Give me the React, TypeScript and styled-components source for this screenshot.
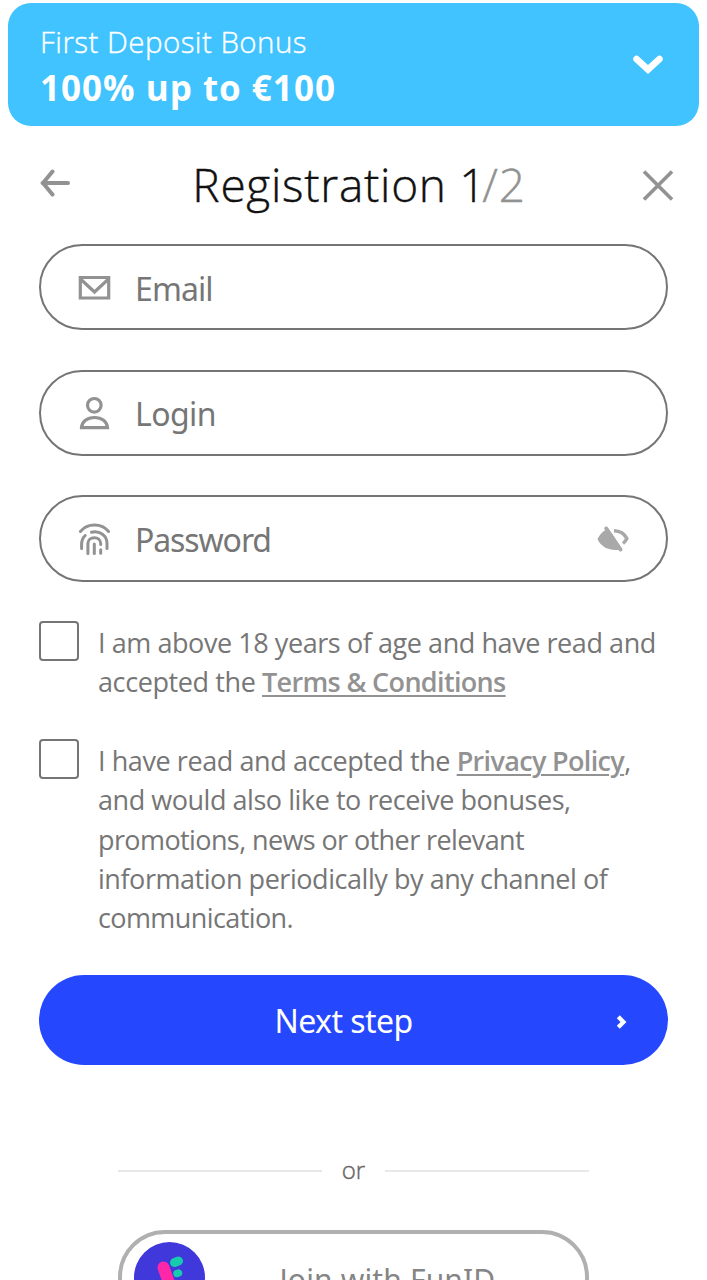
import React from "react";
import styled, { createGlobalStyle } from "styled-components";

const GlobalStyle = createGlobalStyle`
  *, *::before, *::after { box-sizing: border-box; }
  html, body { margin: 0; background: #fff; }
  body { height: 1280px; overflow: hidden; }
  button, input { font: inherit; }
`;

const Page = styled.main`
  width: 707px;
  height: 1280px;
  overflow: hidden;
  padding: 3px 8px 0;
  background: #fff;
  color: #767676;
  font-family: "Open Sans", "Noto Sans", sans-serif;
`;

const Banner = styled.section`
  display: flex;
  align-items: center;
  justify-content: space-between;
  height: 123px;
  padding: 0 36px 0 32px;
  border-radius: 23px;
  background: #40c3ff;
  color: #fff;
`;

const BannerText = styled.div`
  display: flex;
  flex-direction: column;
  padding-top: 1px;
`;

const BannerLabel = styled.span`
  font-size: 29.5px;
  line-height: 44px;
  font-weight: 300;
  letter-spacing: 0.45px;
  -webkit-text-stroke: 0.4px currentColor;
  white-space: nowrap;
`;

const BannerAmount = styled.strong`
  font-size: 35px;
  line-height: 47px;
  font-weight: 700;
  letter-spacing: 1px;
  white-space: nowrap;
`;

const Content = styled.div`
  padding: 0 31px;
`;

const Header = styled.header`
  display: flex;
  align-items: center;
  justify-content: space-between;
  height: 118px;
`;

const IconButton = styled.button`
  display: flex;
  width: 32px;
  height: 32px;
  padding: 0;
  border: 0;
  background: none;
  color: #929292;
`;

const CloseButton = styled(IconButton)`
  margin: 0 -6px 0 0;
`;

const Title = styled.h1`
  margin: 0 0 3px 5px;
  font-size: 46px;
  line-height: 60px;
  font-weight: 300;
  letter-spacing: 0.7px;
  -webkit-text-stroke: 0.4px currentColor;
  color: #111;
  white-space: nowrap;
`;

const Total = styled.span`
  margin-left: -4px;
  color: #929292;
`;

const Fields = styled.div`
  display: flex;
  flex-direction: column;
  gap: 39.3px;
`;

const Field = styled.label`
  display: flex;
  align-items: center;
  height: 86.4px;
  padding: 0 37px 0 36px;
  border: 2px solid #757575;
  border-radius: 44px;
`;

const FieldName = styled.span<{ $spacing: number }>`
  flex: 1;
  margin-left: 24px;
  padding-top: 3px;
  font-family: "Noto Sans", sans-serif;
  font-size: 32px;
  line-height: 44px;
  letter-spacing: ${(p) => p.$spacing}px;
`;

const Consents = styled.div`
  display: flex;
  flex-direction: column;
  gap: 39.3px;
  margin-top: 39.3px;
`;

const Consent = styled.label`
  display: flex;
  align-items: flex-start;
  gap: 19px;
`;

const Box = styled.span`
  flex: none;
  width: 40px;
  height: 40px;
  border: 2px solid #757575;
  border-radius: 4px;
`;

const ConsentText = styled.p`
  margin: 2px 0 -2px;
  font-size: 27px;
  line-height: 39.3px;
`;

const Line = styled.span<{ $spacing: number }>`
  display: block;
  white-space: nowrap;
  letter-spacing: ${(p) => p.$spacing}px;
`;

const DocLink = styled.a`
  color: #929292;
  font-weight: 600;
  letter-spacing: -0.66px;
  text-decoration: underline;
  text-decoration-thickness: 2px;
  text-underline-offset: 3px;
`;

const NextButton = styled.button`
  display: flex;
  align-items: center;
  width: 100%;
  height: 90px;
  margin-top: 39.6px;
  padding: 3px 40px 0 32px;
  border: 0;
  border-radius: 45px;
  background: #2548ff;
  color: #fff;
`;

const NextLabel = styled.span`
  flex: 1;
  margin-top: -2px;
  font-family: "Noto Sans", sans-serif;
  font-size: 32px;
  line-height: 44px;
  letter-spacing: -0.55px;
  text-align: center;
`;

const Alternative = styled.div`
  width: 471px;
  margin: 84px auto 0;
`;

const Divider = styled.div`
  display: flex;
  align-items: center;
  justify-content: space-between;
  height: 44px;
  color: #666;

  &::before,
  &::after {
    content: "";
    width: 204px;
    height: 2px;
    background: #e8e8e8;
  }
`;

const DividerLabel = styled.span`
  margin-top: -3px;
  font-size: 24px;
  font-weight: 300;
  -webkit-text-stroke: 0.4px currentColor;
`;

const JoinButton = styled.button`
  display: flex;
  align-items: center;
  width: 100%;
  height: 95px;
  margin-top: 37px;
  padding: 0 12px 0 11.5px;
  border: 4px solid #b0b0b0;
  border-radius: 47px;
  background: #fff;
  color: #858585;
`;

const JoinLabel = styled.span`
  margin-left: 75px;
  padding-top: 3px;
  font-size: 30px;
  font-family: "Noto Sans", sans-serif;
  letter-spacing: 0.15px;
  white-space: nowrap;
`;

const ChevronDown = () => (
  <svg width="30" height="20" viewBox="0 0 30 20" fill="none">
    <path d="M3.5 4 15 14.500 26.500 4" stroke="#fff" strokeWidth="6.500" strokeLinecap="round" />
  </svg>
);

const BackArrow = () => (
  <svg width="32" height="32" viewBox="0 0 32 32" fill="none" stroke="currentColor" strokeWidth="4" strokeLinecap="round">
    <path d="M29 14H3.500M13.500 2.500 4 14l9.500 11.500" />
  </svg>
);

const CloseIcon = () => (
  <svg width="32" height="32" viewBox="0 0 32 32" fill="none" stroke="currentColor" strokeWidth="3.600">
    <path d="m2 2.500 28 28M30 2.500 2 30.500" />
  </svg>
);

const MailIcon = () => (
  <svg width="34" height="34" viewBox="0 0 34 34" fill="none" stroke="#929292" strokeWidth="3.200">
    <path d="M3.300 7.500h28.400v20.500H3.300zM3.500 9 17.500 22 31.500 9" />
  </svg>
);

const UserIcon = () => (
  <svg width="34" height="34" viewBox="0 0 34 34" fill="none" stroke="#929292" strokeWidth="3.200">
    <circle cx="17.300" cy="9.300" r="6.800" />
    <path d="M4.500 31.700c.5-6 5.500-10.200 13-10.200s12.500 4.200 13 10.200z" />
  </svg>
);

const FingerprintIcon = () => (
  <svg width="34" height="34" viewBox="0 0 34 34" fill="none" stroke="#929292" strokeWidth="3" strokeLinecap="round">
    <path d="M3.400 9.500C10.500.800 24.500.800 31.600 9.500" />
    <path d="M14.500 10.200c8.500-1.800 15.500 3.500 15.500 11V26.500" />
    <path d="M8.200 13.500C5.500 16 4.600 19 4.600 22.500V26.500" />
    <path d="M10.900 31.500V21.500c0-7.800 12.800-7.800 12.800 0v1M23.700 27.800v3.400" />
    <path d="M17.300 22v9.500" />
  </svg>
);

const HiddenIcon = () => (
  <svg width="32" height="28" viewBox="0 0 32 28">
    <path d="M.5 14C2 10.500 5 7 8.500 5l3.500 1 11.500 18.500C14 26.500 4 22.500.5 14z" fill="#a9a9a9" />
    <path d="M9.300 3.500 23.500 24.500" stroke="#a9a9a9" strokeWidth="4" strokeLinecap="round" />
    <path d="M17 5.800c6 .2 10.500 3 12.800 7.700-.8 2-2 3.500-3.800 5" fill="none" stroke="#a9a9a9" strokeWidth="3.400" />
  </svg>
);

const ChevronRight = () => (
  <svg width="12" height="16" viewBox="0 0 12 16" fill="none">
    <path d="M2.300 2.800 7.500 8 2.300 13.200" stroke="#fff" strokeWidth="4.200" />
  </svg>
);

const FunLogo = () => (
  <svg width="71" height="71" viewBox="0 0 71 71">
    <circle cx="35.500" cy="35.500" r="35.500" fill="#4038db" />
    <path d="M29.500 25.500 39 52" stroke="#ff26a8" strokeWidth="12" strokeLinecap="round" />
    <path d="m40.500 20.500 4-1.500" stroke="#16ccad" strokeWidth="9" strokeLinecap="round" />
    <path d="m43 31.500 1.500-.5" stroke="#16ccad" strokeWidth="7.500" strokeLinecap="round" />
  </svg>
);

export default function App() {
  return (
    <>
      <GlobalStyle />
      <Page>
        <Banner>
          <BannerText>
            <BannerLabel>First Deposit Bonus</BannerLabel>
            <BannerAmount>100% up to €100</BannerAmount>
          </BannerText>
          <ChevronDown />
        </Banner>
        <Content>
          <Header>
            <IconButton aria-label="Back"><BackArrow /></IconButton>
            <Title>Registration 1<Total>/2</Total></Title>
            <CloseButton aria-label="Close"><CloseIcon /></CloseButton>
          </Header>
          <Fields>
            <Field><MailIcon /><FieldName $spacing={-0.9}>Email</FieldName></Field>
            <Field><UserIcon /><FieldName $spacing={-0.6}>Login</FieldName></Field>
            <Field><FingerprintIcon /><FieldName $spacing={-1.1}>Password</FieldName><HiddenIcon /></Field>
          </Fields>
          <Consents>
            <Consent>
              <Box />
              <ConsentText>
                <Line $spacing={-0.43}>I am above 18 years of age and have read and</Line>
                <Line $spacing={-0.4}>accepted the <DocLink>Terms &amp; Conditions</DocLink></Line>
              </ConsentText>
            </Consent>
            <Consent>
              <Box />
              <ConsentText>
                <Line $spacing={-0.42}>I have read and accepted the <DocLink>Privacy Policy</DocLink>,</Line>
                <Line $spacing={-0.46}>and would also like to receive bonuses,</Line>
                <Line $spacing={-0.6}>promotions, news or other relevant</Line>
                <Line $spacing={-0.45}>information periodically by any channel of</Line>
                <Line $spacing={-0.6}>communication.</Line>
              </ConsentText>
            </Consent>
          </Consents>
          <NextButton>
            <NextLabel>Next step</NextLabel>
            <ChevronRight />
          </NextButton>
          <Alternative>
            <Divider><DividerLabel>or</DividerLabel></Divider>
            <JoinButton>
              <FunLogo />
              <JoinLabel>Join with FunID</JoinLabel>
            </JoinButton>
          </Alternative>
        </Content>
      </Page>
    </>
  );
}
